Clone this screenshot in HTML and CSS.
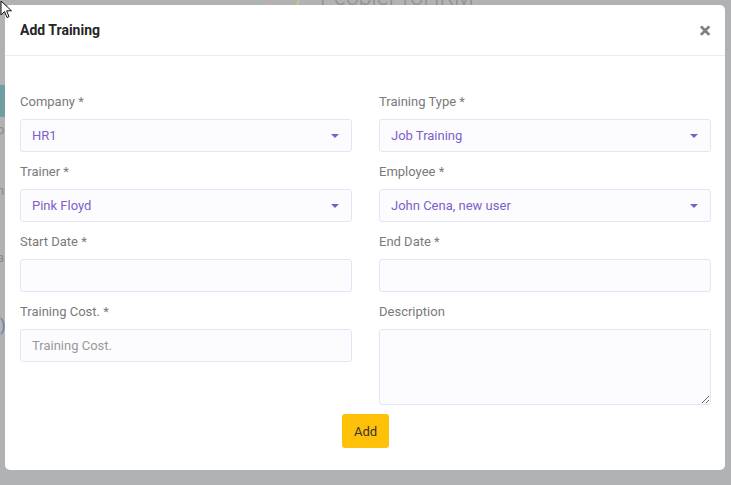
FILE: index.html
```html
<!DOCTYPE html>
<html>
<head>
<meta charset="utf-8">
<link rel="stylesheet" href="styles.css">
</head>
<body>
<div class="backdrop">
  <div class="bg-logo"><span class="bg-ring"></span><span class="bg-brand">PeopleProHRM</span></div>
  <div class="bg-tab"></div>
  <div class="bg-frag f1">or</div>
  <div class="bg-frag f2">n</div>
  <div class="bg-frag f3">a</div>
  <div class="bg-frag f4">)</div>
</div>

<div class="modal">
  <div class="modal-header">
    <h5 class="modal-title">Add Training</h5>
    <span class="close">&times;</span>
  </div>
  <div class="modal-body">
    <div class="grid">
      <div class="field">
        <label class="lbl">Company *</label>
        <div class="select"><span>HR1</span><i class="caret"></i></div>
      </div>
      <div class="field">
        <label class="lbl">Training Type *</label>
        <div class="select"><span>Job Training</span><i class="caret"></i></div>
      </div>
      <div class="field">
        <label class="lbl">Trainer *</label>
        <div class="select"><span>Pink Floyd</span><i class="caret"></i></div>
      </div>
      <div class="field">
        <label class="lbl">Employee *</label>
        <div class="select"><span>John Cena, new user</span><i class="caret"></i></div>
      </div>
      <div class="field">
        <label class="lbl">Start Date *</label>
        <input class="input" type="text">
      </div>
      <div class="field">
        <label class="lbl">End Date *</label>
        <input class="input" type="text">
      </div>
      <div class="field last">
        <label class="lbl">Training Cost. *</label>
        <input class="input" type="text" placeholder="Training Cost.">
      </div>
      <div class="field last">
        <label class="lbl">Description</label>
        <textarea class="input textarea"></textarea>
      </div>
    </div>
    <div class="actions"><button class="btn">Add</button></div>
  </div>
</div>

<svg class="cursor" width="14" height="20" viewBox="0 0 14 20"><path d="M1 1 L1 15 L4.5 11.5 L7 17.5 L9 16.6 L6.6 10.8 L11.5 10.8 Z" fill="#fff" stroke="#111" stroke-width="1"/></svg>
</body>
</html>
```
FILE: styles.css
```css
* { box-sizing: border-box; }
html, body { margin: 0; height: 100%; }
body {
  background: #b1b2b4;
  font-family: Roboto, "Noto Sans", Arial, sans-serif;
  position: relative;
  overflow: hidden;
}
.backdrop { position: absolute; inset: 0; }
.bg-logo { position: absolute; left: 266px; top: -20px; display: flex; align-items: center; gap: 20px; }
.bg-ring { width: 34px; height: 34px; border-radius: 50%; border: 2px solid #c9a8b8; border-right-color: #c8c29a; }
.bg-brand { font-size: 23px; color: #8f9092; font-weight: 300; }
.bg-tab { position: absolute; left: 0; top: 85px; width: 8px; height: 32px; background: #6f9ea1; }
.bg-frag { position: absolute; left: -3px; font-size: 13px; color: #8a8b8d; }
.f1 { top: 122px; }
.f2 { top: 183px; }
.f3 { top: 250px; }
.f4 { top: 316px; left: 0; font-size: 16px; color: #6e7aa0; }

.modal {
  position: absolute;
  left: 5px; top: 5px;
  width: 720px;
  height: 465px;
  background: #fff;
  border-radius: 5px;
}
.modal-header {
  height: 51px;
  border-bottom: 1px solid #e9ecef;
  display: flex;
  align-items: center;
  justify-content: space-between;
  padding: 0 14px 0 15px;
}
.modal-title {
  margin: 0;
  font-size: 14px;
  font-weight: 700;
  color: #262626;
}
.close {
  font-size: 22px;
  font-weight: 700;
  color: #7d7d7d;
  line-height: 1;
  margin-top: 1px;
}
.modal-body { padding: 36px 14px 0 15px; }
.grid {
  display: grid;
  grid-template-columns: 332px 332px;
  column-gap: 27px;
}
.field { margin-bottom: 10px; }
.field.last { margin-bottom: 0; }
.lbl {
  display: block;
  font-size: 13px;
  line-height: 20px;
  color: #7a7a7a;
  margin-bottom: 7px;
}
.select, .input {
  display: flex;
  align-items: center;
  justify-content: space-between;
  width: 100%;
  height: 33px;
  border: 1px solid #e4e4f7;
  border-radius: 3px;
  background: #fcfcff;
  padding: 0 11px;
  font-family: inherit;
  font-size: 13px;
  color: #7b5cc9;
}
.select span { color: #7d5fca; }
.caret {
  width: 0; height: 0;
  border-left: 4px solid transparent;
  border-right: 4px solid transparent;
  border-top: 4px solid #7b5cc9;
  margin-right: 1px;
}
.input { outline: none; }
.input::placeholder { color: #999; }
.textarea { height: 76px; resize: vertical; display: block; }
.actions { display: flex; justify-content: center; margin-top: 9px; }
.btn {
  width: 47px;
  height: 34px;
  border: none;
  border-radius: 3px;
  background: #ffc107;
  color: #333;
  font-family: inherit;
  font-size: 13px;
  padding: 0;
}
.cursor { position: absolute; left: 0; top: 0; }
```
